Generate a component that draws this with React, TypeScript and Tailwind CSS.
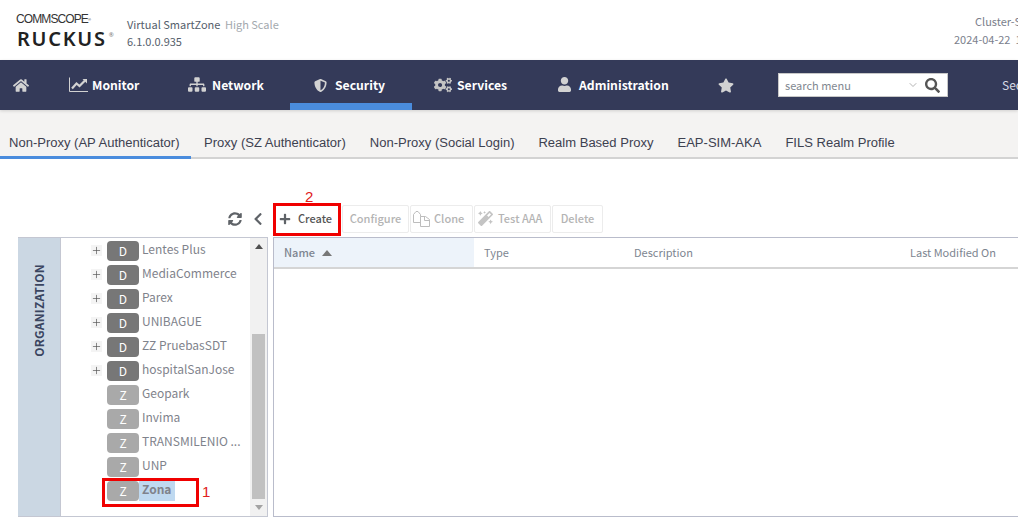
import {
  FaHome,
  FaSitemap,
  FaShieldAlt,
  FaCogs,
  FaUser,
  FaStar,
  FaSearch,
  FaSyncAlt,
  FaChevronLeft,
  FaPlus,
  FaMagic,
} from "react-icons/fa";
import { ChevronDown, Plus } from "lucide-react";

const tabs = [
  "Non-Proxy (AP Authenticator)",
  "Proxy (SZ Authenticator)",
  "Non-Proxy (Social Login)",
  "Realm Based Proxy",
  "EAP-SIM-AKA",
  "FILS Realm Profile",
];

const tree = [
  { kind: "D", name: "Lentes Plus" },
  { kind: "D", name: "MediaCommerce" },
  { kind: "D", name: "Parex" },
  { kind: "D", name: "UNIBAGUE" },
  { kind: "D", name: "ZZ PruebasSDT" },
  { kind: "D", name: "hospitalSanJose" },
  { kind: "Z", name: "Geopark" },
  { kind: "Z", name: "Invima" },
  { kind: "Z", name: "TRANSMILENIO ..." },
  { kind: "Z", name: "UNP" },
  { kind: "Z", name: "Zona" },
];

function LineChartIcon() {
  return (
    <svg viewBox="0 0 19 15" className="h-[15px] w-[19px] shrink-0 text-[#d2d2d2]" fill="none" stroke="currentColor">
      <path d="M0.5 0.5V14.5H19" strokeWidth="1" />
      <path d="M3 11.5L7.5 6.5L10.5 9L16 3.5" strokeWidth="2.2" />
      <path d="M13.5 2H18V6.5Z" fill="currentColor" stroke="none" />
    </svg>
  );
}

function FilesIcon() {
  return (
    <svg viewBox="0 0 17 16" className="h-[16px] w-[17px] shrink-0 text-[#bdbdbd]" fill="none" stroke="currentColor">
      <path d="M7.5 5.5V3.5L5 0.5H3L0.5 3.5V11.5H7" strokeWidth="1" />
      <path d="M7.5 5.5H12.5L16.5 8.5V15.5H7.5Z" strokeWidth="1" />
      <path d="M11.5 5.5V9.5H16" strokeWidth="1" />
    </svg>
  );
}

function NavItem({
  icon,
  label,
  className,
}: {
  icon: React.ReactNode;
  label: string;
  className: string;
}) {
  return (
    <div className={`flex shrink-0 items-center text-[12.2px] font-semibold whitespace-nowrap text-white ${className}`}>
      {icon}
      <span>{label}</span>
    </div>
  );
}

function ToolButton({ children, className }: { children: React.ReactNode; className: string }) {
  return (
    <div
      className={`flex h-[28px] shrink-0 items-center rounded-[2px] border border-[#ececec] text-[11px] font-medium text-[#b4b4b4] ${className}`}
    >
      {children}
    </div>
  );
}

export default function App() {
  return (
    <div className="relative h-[519px] w-[1018px] overflow-hidden bg-white font-['Noto_Sans_CJK_SC','Noto_Sans',sans-serif]">
      {/* Top header */}
      <div className="flex h-[60px]">
        <div className="ml-[16px] w-[111px] shrink-0 pt-[13px]">
          <div className="h-[13px] text-[12px] leading-[13px] tracking-[-0.9px] text-[#333] font-['Liberation_Sans',sans-serif]">
            COMMSCOPE<sup className="text-[4px]">®</sup>
          </div>
          <div className="mt-[3px] flex h-[20px] items-start pl-[1px] text-[20px] leading-[20px] font-semibold tracking-[1.7px] text-[#222] font-['Noto_Sans',sans-serif]">
            RUCKUS<span className="mt-[1px] ml-[2px] text-[6px] leading-[10px] font-normal text-[#777]">®</span>
          </div>
        </div>
        <div className="w-[149px] shrink-0 pt-[16px] text-[11px] leading-[17px] whitespace-nowrap text-[#555e6b]">
          <div>
            Virtual SmartZone <span className="ml-[2px] text-[#a3a9ae]">High Scale</span>
          </div>
          <div>6.1.0.0.935</div>
        </div>
        <div className="ml-[678px] shrink-0 pt-[12px] text-[11px] leading-[18px] whitespace-nowrap text-[#7b808c]">
          <div className="pl-[21px]">Cluster-S</div>
          <div>2024-04-22 &nbsp;1</div>
        </div>
      </div>

      {/* Main nav */}
      <div className="relative z-10 flex h-[50px] items-center bg-[#343a59] shadow-[0_1px_3px_rgba(0,0,0,0.15)]">
        <FaHome className="ml-[13px] h-[15px] w-[16px] shrink-0 text-[#d2d2d2]" />
        <NavItem className="ml-[40px] w-[71px] gap-[4px]" icon={<LineChartIcon />} label="Monitor" />
        <NavItem
          className="ml-[48px] w-[75px] gap-[6px]"
          icon={<FaSitemap className="h-[15px] w-[18px] shrink-0 text-[#d2d2d2]" />}
          label="Network"
        />
        <div className="relative ml-[27px] flex h-full w-[122px] shrink-0 items-center gap-[8px] pl-[24px] text-[12.2px] font-semibold text-white">
          <FaShieldAlt className="h-[15px] w-[13px] shrink-0 text-[#d2d2d2]" />
          <span>Security</span>
          <div className="absolute right-0 bottom-0 left-0 h-[7px] bg-[#4a8cdd]" />
        </div>
        <NavItem
          className="ml-[22px] w-[73px] gap-[5px]"
          icon={<FaCogs className="h-[16px] w-[18px] shrink-0 text-[#c4c4c4]" />}
          label="Services"
        />
        <NavItem
          className="ml-[51px] w-[110px] gap-[8px]"
          icon={<FaUser className="h-[15px] w-[13px] shrink-0 text-[#d2d2d2]" />}
          label="Administration"
        />
        <FaStar className="ml-[50px] h-[15px] w-[16px] shrink-0 text-[#d2d2d2]" />
        <div className="ml-[44px] flex h-[24px] w-[170px] shrink-0 items-center border border-[#c8c8c8] bg-white pl-[6px]">
          <span className="flex-1 text-[11px] text-[#7f8790]">search menu</span>
          <ChevronDown className="mr-[6px] h-[12px] w-[12px] text-[#9a9a9a]" strokeWidth={1.5} />
          <FaSearch className="mr-[7px] h-[15px] w-[15px] text-[#555]" />
        </div>
        <span className="ml-[54px] text-[12px] whitespace-nowrap text-[#d8dbe4]">Sec</span>
      </div>

      {/* Tabs */}
      <div className="flex h-[49px] border-b-2 border-[#d3d3d3] bg-[#f4f3f2] font-['Liberation_Sans',sans-serif] text-[13.03px] text-[#3d4150]">
        {tabs.map((tab, i) => (
          <div
            key={tab}
            className={
              i === 0
                ? "mb-[-2px] flex h-[49px] w-[191px] shrink-0 items-center border-b-[3px] border-[#4a8cdd] pt-[20px] pl-[9px] whitespace-nowrap"
                : "flex h-[47px] shrink-0 items-center pt-[19px] pr-[11px] pl-[13px] whitespace-nowrap"
            }
          >
            {tab}
          </div>
        ))}
      </div>

      {/* Toolbar */}
      <div className="mt-[43px] flex h-[33px] items-center">
        <FaSyncAlt className="ml-[228px] h-[14px] w-[14px] shrink-0 text-[#5f6368]" />
        <FaChevronLeft className="ml-[11px] h-[14px] w-[10px] shrink-0 text-[#5f6368]" />
        <div className="ml-[10px] flex h-[28px] w-[68px] shrink-0 items-center pl-[6px] text-[11px] font-medium text-[#555]">
          <FaPlus className="mr-[7px] h-[12px] w-[12px] text-[#5f6368]" />
          Create
        </div>
        <div className="ml-[1px] flex gap-[1px]">
          <ToolButton className="w-[67px] justify-center">Configure</ToolButton>
          <ToolButton className="w-[63px] gap-[4px] pl-[2px]">
            <FilesIcon />
            Clone
          </ToolButton>
          <ToolButton className="w-[77px] gap-[5px] pl-[3px]">
            <FaMagic className="h-[15px] w-[15px] shrink-0 text-[#c4c4c4]" />
            Test AAA
          </ToolButton>
          <ToolButton className="w-[51px] justify-center">Delete</ToolButton>
        </div>
      </div>

      {/* Content */}
      <div className="mt-[2px] flex h-[280px]">
        <div className="ml-[18px] flex w-[250px] shrink-0 border-t border-r border-b border-[#c4c7d2]">
          <div className="flex w-[43px] shrink-0 justify-center border-r border-[#c4c7d2] bg-[#cbd7e3] pt-[26px]">
            <span className="h-fit rotate-180 text-[12px] font-semibold tracking-[0.2px] whitespace-nowrap text-[#3a4560] [writing-mode:vertical-rl]">
              ORGANIZATION
            </span>
          </div>
          <div className="flex-1 overflow-hidden pt-[3px] pl-[30px]">
            {tree.map((item) => (
              <div key={item.name} className="flex h-[24px] items-start">
                {item.kind === "D" ? (
                  <div className="flex h-[11px] w-[11px] shrink-0 translate-y-[4px] items-center justify-center bg-[#f4f4f4] text-[#555]">
                    <Plus className="h-[11px] w-[11px]" strokeWidth={1.5} />
                  </div>
                ) : (
                  <div className="w-[11px] shrink-0" />
                )}
                <div
                  className={`ml-[5px] flex h-[20px] w-[32px] shrink-0 items-center justify-center rounded-[4px] text-[12px] text-white ${
                    item.kind === "D" ? "bg-[#777777]" : "bg-[#a9a9a9]"
                  }`}
                >
                  {item.kind}
                </div>
                <div
                  className={`flex h-[20px] items-start pl-[3px] text-[12px] leading-[15px] whitespace-nowrap text-[#7f838c] ${
                    item.name === "Zona" ? "w-[36px] bg-[#bfd9f0] font-semibold" : ""
                  }`}
                >
                  {item.name}
                </div>
              </div>
            ))}
          </div>
          <div className="flex w-[17px] shrink-0 flex-col bg-[#f1f1f1]">
            <div className="flex h-[16px] items-center justify-center">
              <div className="h-0 w-0 border-r-[4px] border-b-[5px] border-l-[4px] border-r-transparent border-b-[#505050] border-l-transparent" />
            </div>
            <div className="mt-[80px] ml-[2px] w-[13px] flex-1 bg-[#c1c1c1]" />
            <div className="flex h-[17px] items-center justify-center">
              <div className="h-0 w-0 border-t-[5px] border-r-[4px] border-l-[4px] border-t-[#a3a3a3] border-r-transparent border-l-transparent" />
            </div>
          </div>
        </div>

        <div className="ml-[5px] flex-1 border border-r-0 border-[#b9bccb]">
          <div className="flex h-[31px] border-b-2 border-[#d5d5d5] text-[11px] text-[#7d8590]">
            <div className="flex w-[200px] items-center gap-[7px] bg-[#edf3fa] pl-[10px] font-medium">
              Name
              <div className="h-0 w-0 border-r-[5px] border-b-[6px] border-l-[5px] border-r-transparent border-b-[#777] border-l-transparent" />
            </div>
            <div className="flex w-[150px] items-center pl-[10px]">Type</div>
            <div className="flex w-[276px] items-center pl-[10px]">Description</div>
            <div className="flex items-center pl-[10px] whitespace-nowrap">Last Modified On</div>
          </div>
        </div>
      </div>

      {/* Red annotations */}
      <div className="absolute top-[189px] left-[305px] font-['Liberation_Sans',sans-serif] text-[15px] leading-none text-[#e02020]">
        2
      </div>
      <div className="absolute top-[203px] left-[273px] h-[33px] w-[68px] border-[3px] border-[#f00000]" />
      <div className="absolute top-[484px] left-[202px] font-['Liberation_Sans',sans-serif] text-[15px] leading-none text-[#e02020]">
        1
      </div>
      <div className="absolute top-[478px] left-[102px] h-[29px] w-[97px] border-[3px] border-[#f00000]" />
    </div>
  );
}
